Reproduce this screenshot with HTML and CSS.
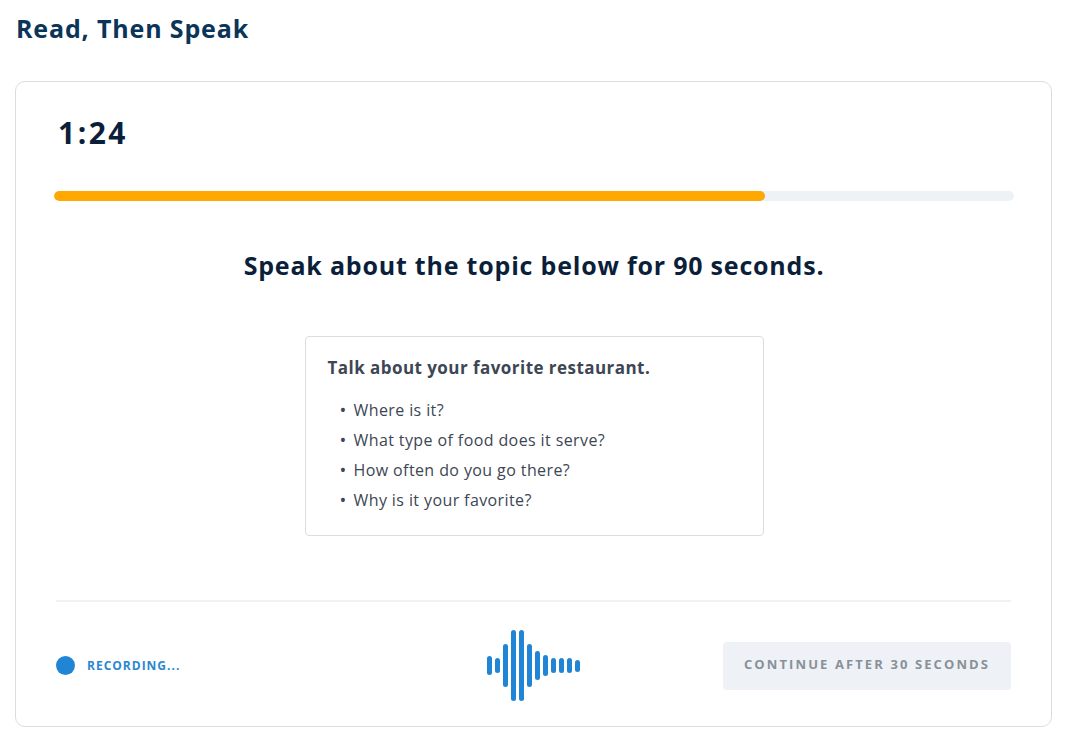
FILE: index.html
```html
<!DOCTYPE html>
<html lang="en">
  <head>
    <meta charset="UTF-8" />
    <meta name="viewport" content="width=device-width, initial-scale=1.0" />
    <title>Read, Then Speak</title>
    <link rel="stylesheet" href="styles.css">
  </head>
  <body>
    <h1 class="page-title">Read, Then Speak</h1>

    <div class="card">
      <div class="timer">1:24</div>
      <div class="progress"><div class="progress-fill" style="width: 74.1%"></div></div>

      <h2 class="prompt">Speak about the topic below for 90 seconds.</h2>

      <div class="topic">
        <div class="topic-title">Talk about your favorite restaurant.</div>
        <ul class="topic-list">
          <li>Where is it?</li>
          <li>What type of food does it serve?</li>
          <li>How often do you go there?</li>
          <li>Why is it your favorite?</li>
        </ul>
      </div>

      <div class="footer">
        <div class="recording">
          <span class="rec-dot"></span>
          <span class="rec-label">RECORDING...</span>
        </div>

        <div class="wave">
          <span class="bar" style="height: 19px"></span>
          <span class="bar" style="height: 15px"></span>
          <span class="bar" style="height: 43px"></span>
          <span class="bar" style="height: 71px"></span>
          <span class="bar" style="height: 71px"></span>
          <span class="bar" style="height: 43px"></span>
          <span class="bar" style="height: 29px"></span>
          <span class="bar" style="height: 21px"></span>
          <span class="bar" style="height: 15px"></span>
          <span class="bar" style="height: 15px"></span>
          <span class="bar" style="height: 15px"></span>
          <span class="bar" style="height: 12px"></span>
        </div>

        <button class="continue-btn" type="button" disabled>CONTINUE AFTER 30 SECONDS</button>
      </div>
    </div>
  </body>
</html>
```

FILE: styles.css
```css
body {
  font-family: "Open Sans", "Liberation Sans", sans-serif;
  margin: 0;
  padding: 12px 16px 0 15px;
  background: #fff;
}
.page-title {
  margin: 0 0 0 1px;
  font-size: 25px;
  line-height: 32px;
  font-weight: 700;
  letter-spacing: 0.85px;
  color: #0b3558;
}
.card {
  margin-top: 37px;
  border: 1px solid #dcdcdc;
  border-radius: 10px;
  padding: 33px 37px 25px 38px;
}
.timer {
  font-size: 30px;
  line-height: 36px;
  font-weight: 700;
  letter-spacing: 2.5px;
  color: #0a1f3c;
  padding-left: 4px;
}
.progress {
  margin-top: 40px;
  height: 10px;
  border-radius: 5px;
  background: #eef2f5;
  overflow: hidden;
}
.progress-fill {
  height: 100%;
  border-radius: 5px;
  background: #ffa800;
}
.prompt {
  margin: 49px 0 0;
  text-align: center;
  font-size: 25px;
  line-height: 30px;
  font-weight: 700;
  letter-spacing: 0.8px;
  color: #0b1f3a;
}
.topic {
  margin: 56px auto 0;
  border: 1px solid #dcdcdc;
  border-radius: 4px;
  padding: 19px 22px 20px;
  box-sizing: border-box;
  width: 459px;
  color: #3d4654;
}
.topic-title {
  font-size: 17px;
  line-height: 24px;
  font-weight: 700;
  letter-spacing: 0.45px;
}
.topic-list {
  list-style: none;
  margin: 15px 0 0;
  padding: 0;
}
.topic-list li {
  display: flex;
  font-size: 16px;
  line-height: 30px;
  letter-spacing: 0.4px;
}
.topic-list li::before {
  content: "•";
  width: 14px;
  margin-left: 12px;
  font-size: 18px;
}
.footer {
  margin-top: 64px;
  margin-left: 2px;
  margin-right: 3px;
  border-top: 2px solid #f0f1f4;
  padding-top: 28px;
  display: grid;
  grid-template-columns: 1fr auto 1fr;
  align-items: center;
}
.recording {
  display: flex;
  align-items: center;
  gap: 12px;
}
.rec-dot {
  width: 19px;
  height: 19px;
  border-radius: 50%;
  background: #2185d5;
}
.rec-label {
  font-size: 12px;
  font-weight: 700;
  letter-spacing: 1px;
  color: #2b87d1;
}
.wave {
  display: flex;
  align-items: center;
  gap: 3px;
  height: 71px;
}
.bar {
  width: 5px;
  border-radius: 3px;
  background: #2185d5;
}
.continue-btn {
  justify-self: end;
  width: 288px;
  height: 48px;
  border: none;
  border-radius: 4px;
  background: #eef2f6;
  color: #8a9099;
  font-family: inherit;
  font-size: 13px;
  font-weight: 700;
  letter-spacing: 2.1px;
  padding-bottom: 4px;
}
```
